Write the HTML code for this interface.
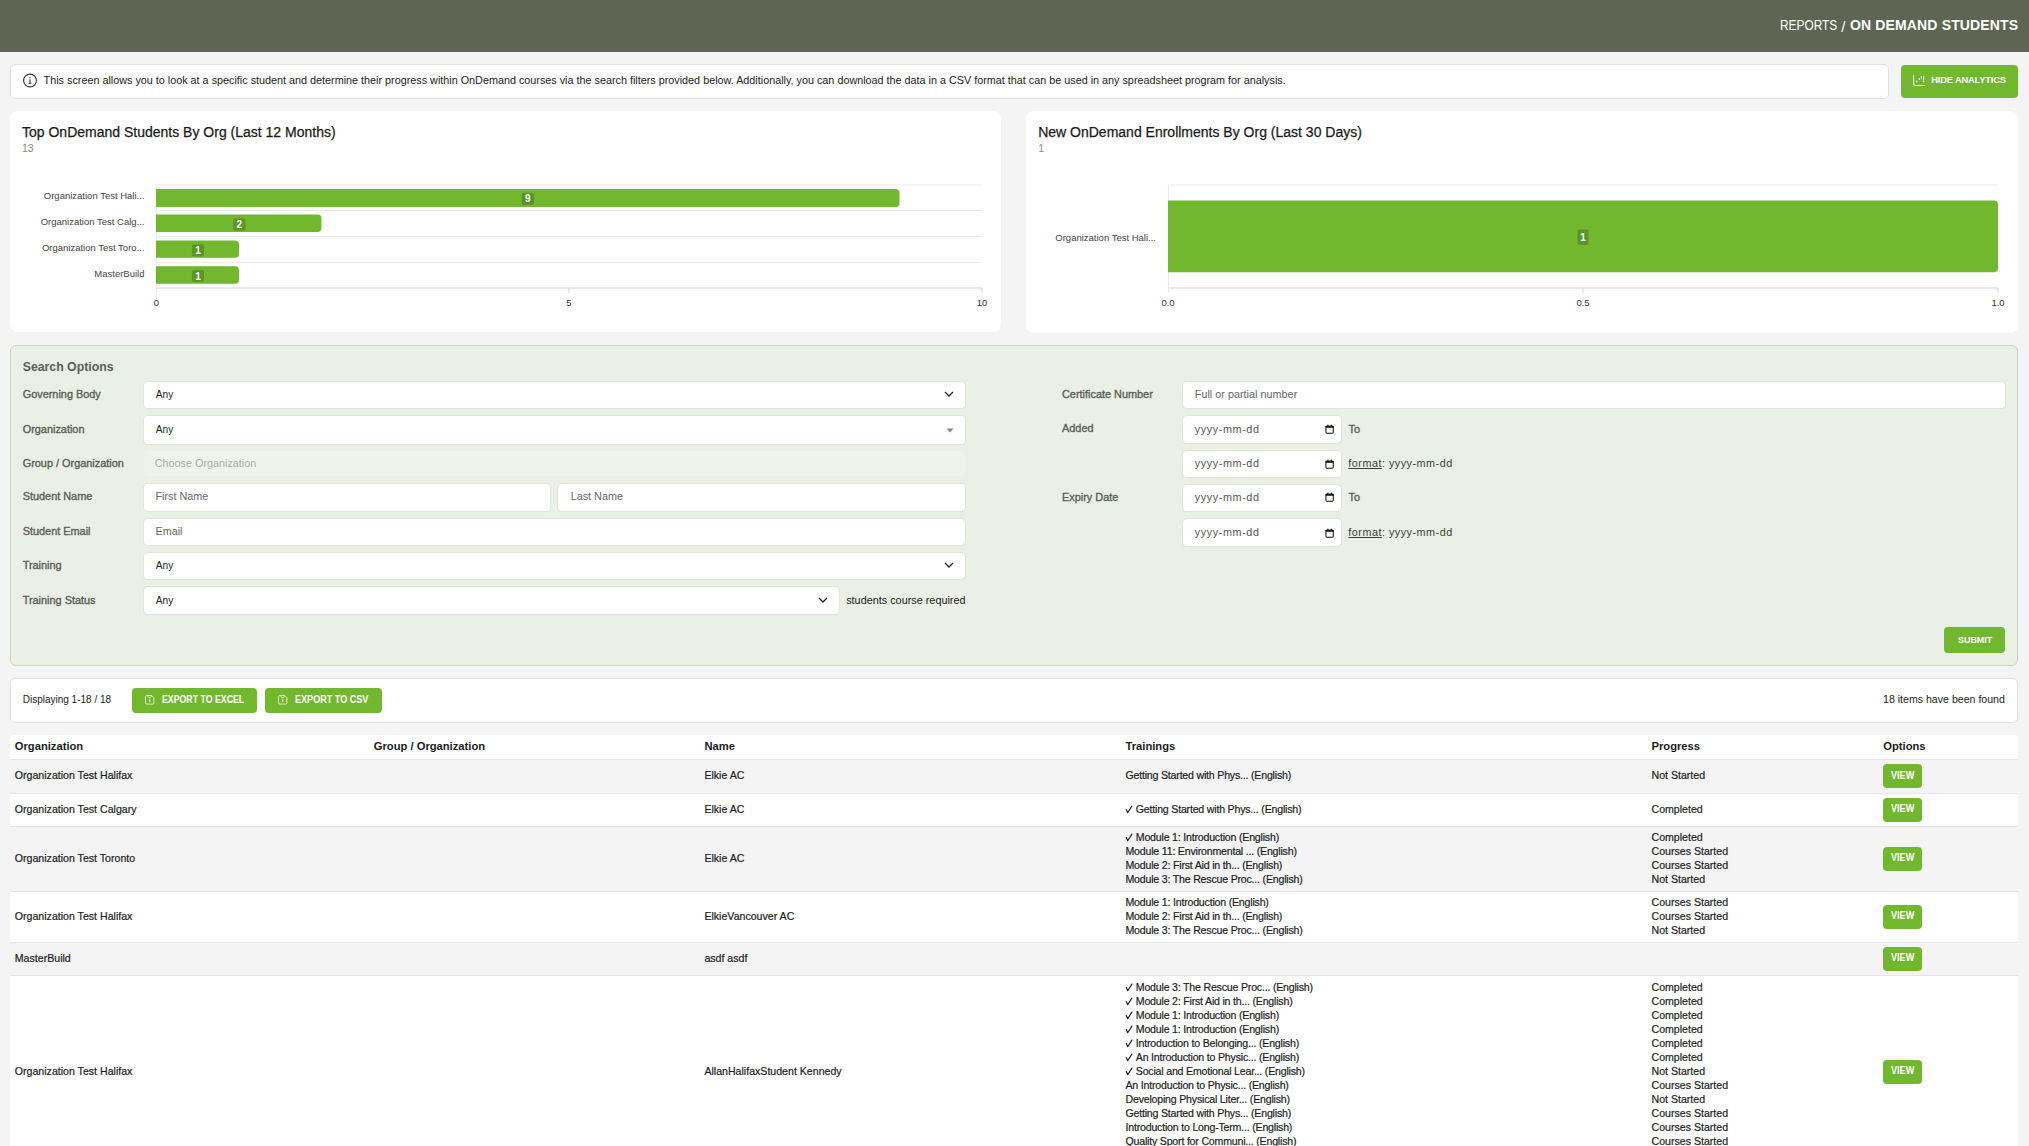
<!DOCTYPE html>
<html><head><meta charset="utf-8">
<style>
*{box-sizing:border-box;margin:0;padding:0}
html,body{width:2029px;height:1146px;overflow:hidden;background:#f4f4f4;font-family:"Liberation Sans",sans-serif;color:#222}
.abs{position:absolute}
.t{position:absolute;white-space:nowrap;line-height:1}
.inp{position:absolute;background:#fff;border-radius:4px;box-shadow:0 0 0 1px #e1e5dc, 0 1px 1.5px rgba(0,0,0,.06)}
</style></head><body>
<div class="abs" style="left:0px;top:0px;width:2029.00px;height:52.00px;background:#5e6553"></div>
<div class="t" style="left:1779.60px;top:18.34px;font-size:14px;font-weight:400;color:#fff;;transform:scaleX(0.85);transform-origin:0 0">REPORTS</div>
<div class="t" style="left:1841.20px;top:18.65px;font-size:15px;font-weight:400;color:#fff;">/</div>
<div class="t" style="right:10.70px;top:18.34px;font-size:14px;font-weight:700;color:#fff;letter-spacing:0.15px">ON DEMAND STUDENTS</div>
<div class="abs" style="left:10px;top:64px;width:1878.50px;height:34.50px;background:#fff;border-radius:5px;border:1px solid #e2e2e2"></div>
<svg class="abs" style="left:22px;top:73px" width="16" height="16" viewBox="0 0 16 16"><circle cx="8" cy="7.5" r="6.4" fill="none" stroke="#333" stroke-width="1.1"/><rect x="7.45" y="6.4" width="1.1" height="3.8" fill="#333"/><rect x="6.6" y="9.9" width="2.8" height="0.9" fill="#333"/><circle cx="8" cy="4.7" r="0.65" fill="#333"/></svg>
<div class="t" style="left:43.60px;top:75.21px;font-size:10.8px;font-weight:400;color:#222;">This screen allows you to look at a specific student and determine their progress within OnDemand courses via the search filters provided below. Additionally, you can download the data in a CSV format that can be used in any spreadsheet program for analysis.</div>
<div class="abs" style="left:1901px;top:65px;width:117.00px;height:33.00px;background:#72b82e;border-radius:4px"></div>
<svg class="abs" style="left:1912px;top:74px" width="14" height="13" viewBox="0 0 14 13"><path d="M1.6 1.6V10Q1.6 11.4 3 11.4H12.6" fill="none" stroke="#fff" stroke-width="1.05" stroke-linecap="round"/><g stroke="#fff" stroke-width="1.05" stroke-linecap="round" fill="none"><path d="M4.8 7V8"/><path d="M7.3 4.6V5.5"/><path d="M9.4 2.5V4.3"/><path d="M11.6 2.5V8"/></g></svg>
<div class="t" style="left:1931.20px;top:76.44px;font-size:9.3px;font-weight:700;color:#fff;letter-spacing:-0.15px">HIDE ANALYTICS</div>
<div class="abs" style="left:10px;top:111px;width:991.00px;height:221.00px;background:#fff;border-radius:8px"></div>
<div class="abs" style="left:1026px;top:111px;width:991.50px;height:221.50px;background:#fff;border-radius:8px"></div>
<div class="t" style="left:22.00px;top:124.64px;font-size:14px;font-weight:400;color:#1a1a1a;-webkit-text-stroke:0.25px #1a1a1a">Top OnDemand Students By Org (Last 12 Months)</div>
<div class="t" style="left:22.00px;top:142.85px;font-size:10.5px;font-weight:400;color:#8a8a8a;">13</div>
<div class="t" style="left:1038.20px;top:124.64px;font-size:14px;font-weight:400;color:#1a1a1a;-webkit-text-stroke:0.25px #1a1a1a">New OnDemand Enrollments By Org (Last 30 Days)</div>
<div class="t" style="left:1038.20px;top:142.85px;font-size:10.5px;font-weight:400;color:#8a8a8a;">1</div>
<svg class="abs" style="left:0;top:0" width="2029" height="340" viewBox="0 0 2029 340" font-family="Liberation Sans">
 <g stroke="#ececec" stroke-width="1.2">
  <line x1="156" y1="185" x2="982" y2="185"/>
  <line x1="156" y1="210.5" x2="982" y2="210.5"/>
  <line x1="156" y1="236.5" x2="982" y2="236.5"/>
  <line x1="156" y1="262.5" x2="982" y2="262.5"/>
  <line x1="156.5" y1="184" x2="156.5" y2="293"/>
  <line x1="1168" y1="185" x2="1998" y2="185"/>
  <line x1="1168.5" y1="184" x2="1168.5" y2="293"/>
 </g>
 <g stroke="#e2e2e2" stroke-width="1.6">
  <line x1="156" y1="288" x2="982" y2="288"/>
  <line x1="569" y1="288" x2="569" y2="293"/>
  <line x1="982" y1="288" x2="982" y2="293"/>
  <line x1="1168" y1="288" x2="1998" y2="288"/>
  <line x1="1583" y1="288" x2="1583" y2="293"/>
  <line x1="1998" y1="288" x2="1998" y2="293"/>
 </g>
 <g fill="#72b82e">
  <path d="M156 189H895.5a4 4 0 0 1 4 4V203a4 4 0 0 1-4 4H156Z"/>
  <path d="M156 214.6H317.5a4 4 0 0 1 4 4V228.1a4 4 0 0 1-4 4H156Z"/>
  <path d="M156 240.5H235a4 4 0 0 1 4 4V253.7a4 4 0 0 1-4 4H156Z"/>
  <path d="M156 266.2H235a4 4 0 0 1 4 4V279.7a4 4 0 0 1-4 4H156Z"/>
  <path d="M1168 200.5H1994a4 4 0 0 1 4 4V268.3a4 4 0 0 1-4 4H1168Z"/>
 </g>
 <g fill="#5b9527">
  <rect x="521.8" y="192.7" width="12.2" height="12.2" rx="2"/>
  <rect x="233.3" y="218.5" width="12.2" height="12.2" rx="2"/>
  <rect x="191.9" y="244.2" width="12.2" height="12.2" rx="2"/>
  <rect x="191.9" y="269.9" width="12.2" height="12.2" rx="2"/>
  <rect x="1577.5" y="229.6" width="11" height="15.3" rx="1.5"/>
 </g>
 <g fill="#fff" font-weight="700" font-size="10" text-anchor="middle">
  <text x="527.9" y="202.4">9</text>
  <text x="239.4" y="228.1">2</text>
  <text x="198" y="253.8">1</text>
  <text x="198" y="279.5">1</text>
  <text x="1583" y="241">1</text>
 </g>
 <g fill="#444" font-size="9.5" text-anchor="end">
  <text x="144.5" y="199">Organization Test Hali...</text>
  <text x="144.5" y="225">Organization Test Calg...</text>
  <text x="144.5" y="251">Organization Test Toro...</text>
  <text x="144.5" y="276.5">MasterBuild</text>
  <text x="1156" y="241">Organization Test Hali...</text>
 </g>
 <g fill="#333" font-size="9.5" text-anchor="middle">
  <text x="156.3" y="306">0</text>
  <text x="569" y="306">5</text>
  <text x="982" y="306">10</text>
  <text x="1168" y="306">0.0</text>
  <text x="1583" y="306">0.5</text>
  <text x="1998" y="306">1.0</text>
 </g>
</svg>
<div class="abs" style="left:10px;top:345px;width:2008.00px;height:320.50px;background:#ebf0e6;border:1px solid #c9d8bc;border-radius:6px"></div>
<div class="t" style="left:22.70px;top:361.47px;font-size:12.3px;font-weight:700;color:#586150;">Search Options</div>
<div class="t" style="left:22.70px;top:389.36px;font-size:10.9px;font-weight:400;color:#5a6152;-webkit-text-stroke:0.35px #5a6152">Governing Body</div>
<div class="t" style="left:22.70px;top:424.36px;font-size:10.9px;font-weight:400;color:#5a6152;-webkit-text-stroke:0.35px #5a6152">Organization</div>
<div class="t" style="left:22.70px;top:457.86px;font-size:10.9px;font-weight:400;color:#5a6152;-webkit-text-stroke:0.35px #5a6152">Group / Organization</div>
<div class="t" style="left:22.70px;top:491.16px;font-size:10.9px;font-weight:400;color:#5a6152;-webkit-text-stroke:0.35px #5a6152">Student Name</div>
<div class="t" style="left:22.70px;top:526.16px;font-size:10.9px;font-weight:400;color:#5a6152;-webkit-text-stroke:0.35px #5a6152">Student Email</div>
<div class="t" style="left:22.70px;top:560.16px;font-size:10.9px;font-weight:400;color:#5a6152;-webkit-text-stroke:0.35px #5a6152">Training</div>
<div class="t" style="left:22.70px;top:595.16px;font-size:10.9px;font-weight:400;color:#5a6152;-webkit-text-stroke:0.35px #5a6152">Training Status</div>
<div class="inp" style="left:143.5px;top:381.5px;width:821.50px;height:26.50px"></div>
<div class="t" style="left:155.70px;top:389.70px;font-size:10.2px;font-weight:400;color:#222;">Any</div>
<svg class="abs" style="left:944.1px;top:391.3px" width="10" height="6" viewBox="0 0 10 6"><path d="M1 1L5 5L9 1" fill="none" stroke="#222" stroke-width="1.25"/></svg>
<div class="inp" style="left:143.5px;top:416px;width:821.50px;height:28.00px"></div>
<div class="t" style="left:155.70px;top:424.70px;font-size:10.2px;font-weight:400;color:#222;">Any</div>
<svg class="abs" style="left:945.5px;top:427.5px" width="8" height="5" viewBox="0 0 8 5"><path d="M0.5 0.5H7.5L4 4.5Z" fill="#888"/></svg>
<div class="abs" style="left:143.5px;top:451px;width:821.50px;height:25.00px;background:#eff3ea;border-radius:4px"></div>
<div class="t" style="left:154.80px;top:457.91px;font-size:10.8px;font-weight:400;color:#aab0a5;">Choose Organization</div>
<div class="inp" style="left:143.5px;top:484px;width:406.50px;height:27.00px"></div>
<div class="t" style="left:155.50px;top:491.21px;font-size:10.8px;font-weight:400;color:#666;">First Name</div>
<div class="inp" style="left:558px;top:484px;width:407.00px;height:27.00px"></div>
<div class="t" style="left:570.70px;top:491.21px;font-size:10.8px;font-weight:400;color:#666;">Last Name</div>
<div class="inp" style="left:143.5px;top:518.5px;width:821.50px;height:26.50px"></div>
<div class="t" style="left:155.50px;top:526.21px;font-size:10.8px;font-weight:400;color:#666;">Email</div>
<div class="inp" style="left:143.5px;top:553px;width:821.50px;height:26.00px"></div>
<div class="t" style="left:155.70px;top:560.50px;font-size:10.2px;font-weight:400;color:#222;">Any</div>
<svg class="abs" style="left:944.1px;top:562.2px" width="10" height="6" viewBox="0 0 10 6"><path d="M1 1L5 5L9 1" fill="none" stroke="#222" stroke-width="1.25"/></svg>
<div class="inp" style="left:143.5px;top:587px;width:695.50px;height:27.00px"></div>
<div class="t" style="left:155.70px;top:595.50px;font-size:10.2px;font-weight:400;color:#222;">Any</div>
<svg class="abs" style="left:818.2px;top:597.2px" width="10" height="6" viewBox="0 0 10 6"><path d="M1 1L5 5L9 1" fill="none" stroke="#222" stroke-width="1.25"/></svg>
<div class="t" style="left:846.20px;top:595.18px;font-size:10.85px;font-weight:400;color:#222;">students course required</div>
<div class="t" style="left:1062.00px;top:389.16px;font-size:10.9px;font-weight:400;color:#5a6152;-webkit-text-stroke:0.35px #5a6152">Certificate Number</div>
<div class="t" style="left:1062.00px;top:423.16px;font-size:10.9px;font-weight:400;color:#5a6152;-webkit-text-stroke:0.35px #5a6152">Added</div>
<div class="t" style="left:1062.00px;top:492.06px;font-size:10.9px;font-weight:400;color:#5a6152;-webkit-text-stroke:0.35px #5a6152">Expiry Date</div>
<div class="inp" style="left:1183px;top:381.5px;width:821.50px;height:26.50px"></div>
<div class="t" style="left:1194.80px;top:389.18px;font-size:10.85px;font-weight:400;color:#666;">Full or partial number</div>
<div class="inp" style="left:1183px;top:416px;width:158.00px;height:27.00px"></div>
<div class="t" style="left:1194.80px;top:423.91px;font-size:10.8px;font-weight:400;color:#555;letter-spacing:0.6px">yyyy-mm-dd</div>
<svg class="abs" style="left:1325.0px;top:424.4px" width="9" height="10" viewBox="0 0 9 10"><rect x="0.95" y="2.2" width="7.3" height="7.0" rx="0.9" fill="none" stroke="#111" stroke-width="1.05"/><rect x="0.6" y="1.8" width="8" height="2.0" rx="0.6" fill="#111"/><rect x="2.4" y="0.6" width="1" height="1.6" fill="#111"/><rect x="5.9" y="0.6" width="1" height="1.6" fill="#111"/></svg>
<div class="t" style="left:1348.50px;top:424.06px;font-size:10.9px;font-weight:400;color:#5a6152;-webkit-text-stroke:0.35px #5a6152">To</div>
<div class="inp" style="left:1183px;top:450.5px;width:158.00px;height:26.50px"></div>
<div class="t" style="left:1194.80px;top:458.11px;font-size:10.8px;font-weight:400;color:#555;letter-spacing:0.6px">yyyy-mm-dd</div>
<svg class="abs" style="left:1325.0px;top:458.6px" width="9" height="10" viewBox="0 0 9 10"><rect x="0.95" y="2.2" width="7.3" height="7.0" rx="0.9" fill="none" stroke="#111" stroke-width="1.05"/><rect x="0.6" y="1.8" width="8" height="2.0" rx="0.6" fill="#111"/><rect x="2.4" y="0.6" width="1" height="1.6" fill="#111"/><rect x="5.9" y="0.6" width="1" height="1.6" fill="#111"/></svg>
<div class="t" style="left:1348.30px;top:458.11px;font-size:10.8px;font-weight:400;color:#3a4234;letter-spacing:0.5px"><u>format</u>: yyyy-mm-dd</div>
<div class="inp" style="left:1183px;top:485px;width:158.00px;height:26.00px"></div>
<div class="t" style="left:1194.80px;top:491.91px;font-size:10.8px;font-weight:400;color:#555;letter-spacing:0.6px">yyyy-mm-dd</div>
<svg class="abs" style="left:1325.0px;top:492.4px" width="9" height="10" viewBox="0 0 9 10"><rect x="0.95" y="2.2" width="7.3" height="7.0" rx="0.9" fill="none" stroke="#111" stroke-width="1.05"/><rect x="0.6" y="1.8" width="8" height="2.0" rx="0.6" fill="#111"/><rect x="2.4" y="0.6" width="1" height="1.6" fill="#111"/><rect x="5.9" y="0.6" width="1" height="1.6" fill="#111"/></svg>
<div class="t" style="left:1348.50px;top:492.06px;font-size:10.9px;font-weight:400;color:#5a6152;-webkit-text-stroke:0.35px #5a6152">To</div>
<div class="inp" style="left:1183px;top:519px;width:158.00px;height:27.00px"></div>
<div class="t" style="left:1194.80px;top:527.01px;font-size:10.8px;font-weight:400;color:#555;letter-spacing:0.6px">yyyy-mm-dd</div>
<svg class="abs" style="left:1325.0px;top:527.5px" width="9" height="10" viewBox="0 0 9 10"><rect x="0.95" y="2.2" width="7.3" height="7.0" rx="0.9" fill="none" stroke="#111" stroke-width="1.05"/><rect x="0.6" y="1.8" width="8" height="2.0" rx="0.6" fill="#111"/><rect x="2.4" y="0.6" width="1" height="1.6" fill="#111"/><rect x="5.9" y="0.6" width="1" height="1.6" fill="#111"/></svg>
<div class="t" style="left:1348.30px;top:527.01px;font-size:10.8px;font-weight:400;color:#3a4234;letter-spacing:0.5px"><u>format</u>: yyyy-mm-dd</div>
<div class="abs" style="left:1944px;top:627px;width:61.00px;height:26.00px;background:#72b82e;border-radius:4px"></div>
<div class="t" style="left:1957.60px;top:634.80px;font-size:9.6px;font-weight:700;color:#fff;;transform:scaleX(0.93);transform-origin:0 0">SUBMIT</div>
<div class="abs" style="left:10px;top:678px;width:2007.50px;height:44.50px;background:#fff;border-radius:5px;border:1px solid #e2e2e2"></div>
<div class="t" style="left:22.70px;top:694.70px;font-size:10px;font-weight:400;color:#222;">Displaying 1-18 / 18</div>
<div class="abs" style="left:132.1px;top:688.1px;width:124.60px;height:24.70px;background:#72b82e;border-radius:4px"></div>
<svg class="abs" style="left:144.8px;top:694.7px" width="10" height="10" viewBox="0 0 10 10"><path d="M1.8 0.5H6.6L8.9 2.8V7.8Q8.9 9.1 7.6 9.1H1.8Q0.5 9.1 0.5 7.8V1.8Q0.5 0.5 1.8 0.5Z" fill="none" stroke="#fff" stroke-opacity="0.85" stroke-width="0.9"/><path d="M2.6 0.6Q2.6 2.6 4.6 2.6Q6.6 2.6 6.6 0.6" fill="none" stroke="#fff" stroke-opacity="0.8" stroke-width="0.8"/><path d="M3.5 5.5H5.9L4.7 6.9Z" fill="#fff"/><path d="M4.7 3.6V5.6" stroke="#fff" stroke-width="0.7"/></svg>
<div class="t" style="left:161.70px;top:694.70px;font-size:10px;font-weight:700;color:#fff;;transform:scaleX(0.877);transform-origin:0 0">EXPORT TO EXCEL</div>
<div class="abs" style="left:265.2px;top:688.1px;width:116.70px;height:24.70px;background:#72b82e;border-radius:4px"></div>
<svg class="abs" style="left:277.9px;top:694.7px" width="10" height="10" viewBox="0 0 10 10"><path d="M1.8 0.5H6.6L8.9 2.8V7.8Q8.9 9.1 7.6 9.1H1.8Q0.5 9.1 0.5 7.8V1.8Q0.5 0.5 1.8 0.5Z" fill="none" stroke="#fff" stroke-opacity="0.85" stroke-width="0.9"/><path d="M2.6 0.6Q2.6 2.6 4.6 2.6Q6.6 2.6 6.6 0.6" fill="none" stroke="#fff" stroke-opacity="0.8" stroke-width="0.8"/><path d="M3.5 5.5H5.9L4.7 6.9Z" fill="#fff"/><path d="M4.7 3.6V5.6" stroke="#fff" stroke-width="0.7"/></svg>
<div class="t" style="left:294.80px;top:694.70px;font-size:10px;font-weight:700;color:#fff;;transform:scaleX(0.907);transform-origin:0 0">EXPORT TO CSV</div>
<div class="t" style="right:24.10px;top:694.41px;font-size:10.6px;font-weight:400;color:#222;">18 items have been found</div>
<div class="abs" style="left:10px;top:735px;width:2007.50px;height:411.00px;background:#fff;border-radius:4px 4px 0 0"></div>
<div class="t" style="left:14.80px;top:740.81px;font-size:11.2px;font-weight:700;color:#1a1a1a;">Organization</div>
<div class="t" style="left:373.80px;top:740.81px;font-size:11.2px;font-weight:700;color:#1a1a1a;">Group / Organization</div>
<div class="t" style="left:704.40px;top:740.81px;font-size:11.2px;font-weight:700;color:#1a1a1a;">Name</div>
<div class="t" style="left:1125.50px;top:740.81px;font-size:11.2px;font-weight:700;color:#1a1a1a;">Trainings</div>
<div class="t" style="left:1651.50px;top:740.81px;font-size:11.2px;font-weight:700;color:#1a1a1a;">Progress</div>
<div class="t" style="left:1883.30px;top:740.81px;font-size:11.2px;font-weight:700;color:#1a1a1a;">Options</div>
<div class="abs" style="left:10px;top:759px;width:2007.50px;height:34.00px;background:#f4f4f4;border-top:1px solid #e6e6e6"></div>
<div class="t" style="left:14.80px;top:770.41px;font-size:10.6px;font-weight:400;color:#1c1c1c;-webkit-text-stroke:0.2px #1c1c1c">Organization Test Halifax</div>
<div class="t" style="left:704.40px;top:770.41px;font-size:10.6px;font-weight:400;color:#1c1c1c;-webkit-text-stroke:0.2px #1c1c1c">Elkie AC</div>
<div class="t" style="left:1125.50px;top:770.41px;font-size:10.6px;font-weight:400;color:#1c1c1c;-webkit-text-stroke:0.2px #1c1c1c;letter-spacing:-0.2px">Getting Started with Phys... (English)</div>
<div class="t" style="left:1651.50px;top:770.41px;font-size:10.6px;font-weight:400;color:#1c1c1c;-webkit-text-stroke:0.2px #1c1c1c">Not Started</div>
<div class="abs" style="left:1883.3px;top:764.3000000000001px;width:38.30px;height:24.00px;background:#72b82e;border-radius:4px"></div>
<div class="t" style="left:1891.10px;top:770.60px;font-size:10.2px;font-weight:700;color:#fff;;transform:scaleX(0.893);transform-origin:0 0">VIEW</div>
<div class="abs" style="left:10px;top:793px;width:2007.50px;height:33.00px;background:#fff;border-top:1px solid #e6e6e6"></div>
<div class="t" style="left:14.80px;top:803.91px;font-size:10.6px;font-weight:400;color:#1c1c1c;-webkit-text-stroke:0.2px #1c1c1c">Organization Test Calgary</div>
<div class="t" style="left:704.40px;top:803.91px;font-size:10.6px;font-weight:400;color:#1c1c1c;-webkit-text-stroke:0.2px #1c1c1c">Elkie AC</div>
<svg class="abs" style="left:1125px;top:804.80px" width="8" height="9" viewBox="0 0 8 9"><path d="M1.3 4.6L2.7 7.7L6.9 1.1" fill="none" stroke="#1c1c1c" stroke-width="1.15" stroke-linecap="round" stroke-linejoin="round"/></svg>
<div class="t" style="left:1135.80px;top:803.91px;font-size:10.6px;font-weight:400;color:#1c1c1c;-webkit-text-stroke:0.2px #1c1c1c;letter-spacing:-0.2px">Getting Started with Phys... (English)</div>
<div class="t" style="left:1651.50px;top:803.91px;font-size:10.6px;font-weight:400;color:#1c1c1c;-webkit-text-stroke:0.2px #1c1c1c">Completed</div>
<div class="abs" style="left:1883.3px;top:797.8000000000001px;width:38.30px;height:24.00px;background:#72b82e;border-radius:4px"></div>
<div class="t" style="left:1891.10px;top:804.10px;font-size:10.2px;font-weight:700;color:#fff;;transform:scaleX(0.893);transform-origin:0 0">VIEW</div>
<div class="abs" style="left:10px;top:826px;width:2007.50px;height:65.00px;background:#f4f4f4;border-top:1px solid #e6e6e6"></div>
<div class="t" style="left:14.80px;top:852.91px;font-size:10.6px;font-weight:400;color:#1c1c1c;-webkit-text-stroke:0.2px #1c1c1c">Organization Test Toronto</div>
<div class="t" style="left:704.40px;top:852.91px;font-size:10.6px;font-weight:400;color:#1c1c1c;-webkit-text-stroke:0.2px #1c1c1c">Elkie AC</div>
<svg class="abs" style="left:1125px;top:832.80px" width="8" height="9" viewBox="0 0 8 9"><path d="M1.3 4.6L2.7 7.7L6.9 1.1" fill="none" stroke="#1c1c1c" stroke-width="1.15" stroke-linecap="round" stroke-linejoin="round"/></svg>
<div class="t" style="left:1135.80px;top:831.91px;font-size:10.6px;font-weight:400;color:#1c1c1c;-webkit-text-stroke:0.2px #1c1c1c;letter-spacing:-0.2px">Module 1: Introduction (English)</div>
<div class="t" style="left:1651.50px;top:831.91px;font-size:10.6px;font-weight:400;color:#1c1c1c;-webkit-text-stroke:0.2px #1c1c1c">Completed</div>
<div class="t" style="left:1125.50px;top:845.91px;font-size:10.6px;font-weight:400;color:#1c1c1c;-webkit-text-stroke:0.2px #1c1c1c;letter-spacing:-0.2px">Module 11: Environmental ... (English)</div>
<div class="t" style="left:1651.50px;top:845.91px;font-size:10.6px;font-weight:400;color:#1c1c1c;-webkit-text-stroke:0.2px #1c1c1c">Courses Started</div>
<div class="t" style="left:1125.50px;top:859.91px;font-size:10.6px;font-weight:400;color:#1c1c1c;-webkit-text-stroke:0.2px #1c1c1c;letter-spacing:-0.2px">Module 2: First Aid in th... (English)</div>
<div class="t" style="left:1651.50px;top:859.91px;font-size:10.6px;font-weight:400;color:#1c1c1c;-webkit-text-stroke:0.2px #1c1c1c">Courses Started</div>
<div class="t" style="left:1125.50px;top:873.91px;font-size:10.6px;font-weight:400;color:#1c1c1c;-webkit-text-stroke:0.2px #1c1c1c;letter-spacing:-0.2px">Module 3: The Rescue Proc... (English)</div>
<div class="t" style="left:1651.50px;top:873.91px;font-size:10.6px;font-weight:400;color:#1c1c1c;-webkit-text-stroke:0.2px #1c1c1c">Not Started</div>
<div class="abs" style="left:1883.3px;top:846.8000000000001px;width:38.30px;height:24.00px;background:#72b82e;border-radius:4px"></div>
<div class="t" style="left:1891.10px;top:853.10px;font-size:10.2px;font-weight:700;color:#fff;;transform:scaleX(0.893);transform-origin:0 0">VIEW</div>
<div class="abs" style="left:10px;top:891px;width:2007.50px;height:51.00px;background:#fff;border-top:1px solid #e6e6e6"></div>
<div class="t" style="left:14.80px;top:910.91px;font-size:10.6px;font-weight:400;color:#1c1c1c;-webkit-text-stroke:0.2px #1c1c1c">Organization Test Halifax</div>
<div class="t" style="left:704.40px;top:910.91px;font-size:10.6px;font-weight:400;color:#1c1c1c;-webkit-text-stroke:0.2px #1c1c1c">ElkieVancouver AC</div>
<div class="t" style="left:1125.50px;top:896.91px;font-size:10.6px;font-weight:400;color:#1c1c1c;-webkit-text-stroke:0.2px #1c1c1c;letter-spacing:-0.2px">Module 1: Introduction (English)</div>
<div class="t" style="left:1651.50px;top:896.91px;font-size:10.6px;font-weight:400;color:#1c1c1c;-webkit-text-stroke:0.2px #1c1c1c">Courses Started</div>
<div class="t" style="left:1125.50px;top:910.91px;font-size:10.6px;font-weight:400;color:#1c1c1c;-webkit-text-stroke:0.2px #1c1c1c;letter-spacing:-0.2px">Module 2: First Aid in th... (English)</div>
<div class="t" style="left:1651.50px;top:910.91px;font-size:10.6px;font-weight:400;color:#1c1c1c;-webkit-text-stroke:0.2px #1c1c1c">Courses Started</div>
<div class="t" style="left:1125.50px;top:924.91px;font-size:10.6px;font-weight:400;color:#1c1c1c;-webkit-text-stroke:0.2px #1c1c1c;letter-spacing:-0.2px">Module 3: The Rescue Proc... (English)</div>
<div class="t" style="left:1651.50px;top:924.91px;font-size:10.6px;font-weight:400;color:#1c1c1c;-webkit-text-stroke:0.2px #1c1c1c">Not Started</div>
<div class="abs" style="left:1883.3px;top:904.8000000000001px;width:38.30px;height:24.00px;background:#72b82e;border-radius:4px"></div>
<div class="t" style="left:1891.10px;top:911.10px;font-size:10.2px;font-weight:700;color:#fff;;transform:scaleX(0.893);transform-origin:0 0">VIEW</div>
<div class="abs" style="left:10px;top:942px;width:2007.50px;height:33.00px;background:#f4f4f4;border-top:1px solid #e6e6e6"></div>
<div class="t" style="left:14.80px;top:952.91px;font-size:10.6px;font-weight:400;color:#1c1c1c;-webkit-text-stroke:0.2px #1c1c1c">MasterBuild</div>
<div class="t" style="left:704.40px;top:952.91px;font-size:10.6px;font-weight:400;color:#1c1c1c;-webkit-text-stroke:0.2px #1c1c1c">asdf asdf</div>
<div class="abs" style="left:1883.3px;top:946.8000000000001px;width:38.30px;height:24.00px;background:#72b82e;border-radius:4px"></div>
<div class="t" style="left:1891.10px;top:953.10px;font-size:10.2px;font-weight:700;color:#fff;;transform:scaleX(0.893);transform-origin:0 0">VIEW</div>
<div class="abs" style="left:10px;top:975px;width:2007.50px;height:192.00px;background:#fff;border-top:1px solid #e6e6e6"></div>
<div class="t" style="left:14.80px;top:1066.11px;font-size:10.6px;font-weight:400;color:#1c1c1c;-webkit-text-stroke:0.2px #1c1c1c">Organization Test Halifax</div>
<div class="t" style="left:704.40px;top:1066.11px;font-size:10.6px;font-weight:400;color:#1c1c1c;-webkit-text-stroke:0.2px #1c1c1c">AllanHalifaxStudent Kennedy</div>
<svg class="abs" style="left:1125px;top:982.50px" width="8" height="9" viewBox="0 0 8 9"><path d="M1.3 4.6L2.7 7.7L6.9 1.1" fill="none" stroke="#1c1c1c" stroke-width="1.15" stroke-linecap="round" stroke-linejoin="round"/></svg>
<div class="t" style="left:1135.80px;top:981.61px;font-size:10.6px;font-weight:400;color:#1c1c1c;-webkit-text-stroke:0.2px #1c1c1c;letter-spacing:-0.2px">Module 3: The Rescue Proc... (English)</div>
<div class="t" style="left:1651.50px;top:981.61px;font-size:10.6px;font-weight:400;color:#1c1c1c;-webkit-text-stroke:0.2px #1c1c1c">Completed</div>
<svg class="abs" style="left:1125px;top:996.50px" width="8" height="9" viewBox="0 0 8 9"><path d="M1.3 4.6L2.7 7.7L6.9 1.1" fill="none" stroke="#1c1c1c" stroke-width="1.15" stroke-linecap="round" stroke-linejoin="round"/></svg>
<div class="t" style="left:1135.80px;top:995.61px;font-size:10.6px;font-weight:400;color:#1c1c1c;-webkit-text-stroke:0.2px #1c1c1c;letter-spacing:-0.2px">Module 2: First Aid in th... (English)</div>
<div class="t" style="left:1651.50px;top:995.61px;font-size:10.6px;font-weight:400;color:#1c1c1c;-webkit-text-stroke:0.2px #1c1c1c">Completed</div>
<svg class="abs" style="left:1125px;top:1010.50px" width="8" height="9" viewBox="0 0 8 9"><path d="M1.3 4.6L2.7 7.7L6.9 1.1" fill="none" stroke="#1c1c1c" stroke-width="1.15" stroke-linecap="round" stroke-linejoin="round"/></svg>
<div class="t" style="left:1135.80px;top:1009.61px;font-size:10.6px;font-weight:400;color:#1c1c1c;-webkit-text-stroke:0.2px #1c1c1c;letter-spacing:-0.2px">Module 1: Introduction (English)</div>
<div class="t" style="left:1651.50px;top:1009.61px;font-size:10.6px;font-weight:400;color:#1c1c1c;-webkit-text-stroke:0.2px #1c1c1c">Completed</div>
<svg class="abs" style="left:1125px;top:1024.50px" width="8" height="9" viewBox="0 0 8 9"><path d="M1.3 4.6L2.7 7.7L6.9 1.1" fill="none" stroke="#1c1c1c" stroke-width="1.15" stroke-linecap="round" stroke-linejoin="round"/></svg>
<div class="t" style="left:1135.80px;top:1023.61px;font-size:10.6px;font-weight:400;color:#1c1c1c;-webkit-text-stroke:0.2px #1c1c1c;letter-spacing:-0.2px">Module 1: Introduction (English)</div>
<div class="t" style="left:1651.50px;top:1023.61px;font-size:10.6px;font-weight:400;color:#1c1c1c;-webkit-text-stroke:0.2px #1c1c1c">Completed</div>
<svg class="abs" style="left:1125px;top:1038.50px" width="8" height="9" viewBox="0 0 8 9"><path d="M1.3 4.6L2.7 7.7L6.9 1.1" fill="none" stroke="#1c1c1c" stroke-width="1.15" stroke-linecap="round" stroke-linejoin="round"/></svg>
<div class="t" style="left:1135.80px;top:1037.61px;font-size:10.6px;font-weight:400;color:#1c1c1c;-webkit-text-stroke:0.2px #1c1c1c;letter-spacing:-0.2px">Introduction to Belonging... (English)</div>
<div class="t" style="left:1651.50px;top:1037.61px;font-size:10.6px;font-weight:400;color:#1c1c1c;-webkit-text-stroke:0.2px #1c1c1c">Completed</div>
<svg class="abs" style="left:1125px;top:1052.50px" width="8" height="9" viewBox="0 0 8 9"><path d="M1.3 4.6L2.7 7.7L6.9 1.1" fill="none" stroke="#1c1c1c" stroke-width="1.15" stroke-linecap="round" stroke-linejoin="round"/></svg>
<div class="t" style="left:1135.80px;top:1051.61px;font-size:10.6px;font-weight:400;color:#1c1c1c;-webkit-text-stroke:0.2px #1c1c1c;letter-spacing:-0.2px">An Introduction to Physic... (English)</div>
<div class="t" style="left:1651.50px;top:1051.61px;font-size:10.6px;font-weight:400;color:#1c1c1c;-webkit-text-stroke:0.2px #1c1c1c">Completed</div>
<svg class="abs" style="left:1125px;top:1066.50px" width="8" height="9" viewBox="0 0 8 9"><path d="M1.3 4.6L2.7 7.7L6.9 1.1" fill="none" stroke="#1c1c1c" stroke-width="1.15" stroke-linecap="round" stroke-linejoin="round"/></svg>
<div class="t" style="left:1135.80px;top:1065.61px;font-size:10.6px;font-weight:400;color:#1c1c1c;-webkit-text-stroke:0.2px #1c1c1c;letter-spacing:-0.2px">Social and Emotional Lear... (English)</div>
<div class="t" style="left:1651.50px;top:1065.61px;font-size:10.6px;font-weight:400;color:#1c1c1c;-webkit-text-stroke:0.2px #1c1c1c">Not Started</div>
<div class="t" style="left:1125.50px;top:1079.61px;font-size:10.6px;font-weight:400;color:#1c1c1c;-webkit-text-stroke:0.2px #1c1c1c;letter-spacing:-0.2px">An Introduction to Physic... (English)</div>
<div class="t" style="left:1651.50px;top:1079.61px;font-size:10.6px;font-weight:400;color:#1c1c1c;-webkit-text-stroke:0.2px #1c1c1c">Courses Started</div>
<div class="t" style="left:1125.50px;top:1093.61px;font-size:10.6px;font-weight:400;color:#1c1c1c;-webkit-text-stroke:0.2px #1c1c1c;letter-spacing:-0.2px">Developing Physical Liter... (English)</div>
<div class="t" style="left:1651.50px;top:1093.61px;font-size:10.6px;font-weight:400;color:#1c1c1c;-webkit-text-stroke:0.2px #1c1c1c">Not Started</div>
<div class="t" style="left:1125.50px;top:1107.61px;font-size:10.6px;font-weight:400;color:#1c1c1c;-webkit-text-stroke:0.2px #1c1c1c;letter-spacing:-0.2px">Getting Started with Phys... (English)</div>
<div class="t" style="left:1651.50px;top:1107.61px;font-size:10.6px;font-weight:400;color:#1c1c1c;-webkit-text-stroke:0.2px #1c1c1c">Courses Started</div>
<div class="t" style="left:1125.50px;top:1121.61px;font-size:10.6px;font-weight:400;color:#1c1c1c;-webkit-text-stroke:0.2px #1c1c1c;letter-spacing:-0.2px">Introduction to Long-Term... (English)</div>
<div class="t" style="left:1651.50px;top:1121.61px;font-size:10.6px;font-weight:400;color:#1c1c1c;-webkit-text-stroke:0.2px #1c1c1c">Courses Started</div>
<div class="t" style="left:1125.50px;top:1135.61px;font-size:10.6px;font-weight:400;color:#1c1c1c;-webkit-text-stroke:0.2px #1c1c1c;letter-spacing:-0.2px">Quality Sport for Communi... (English)</div>
<div class="t" style="left:1651.50px;top:1135.61px;font-size:10.6px;font-weight:400;color:#1c1c1c;-webkit-text-stroke:0.2px #1c1c1c">Courses Started</div>
<div class="abs" style="left:1883.3px;top:1060.0px;width:38.30px;height:24.00px;background:#72b82e;border-radius:4px"></div>
<div class="t" style="left:1891.10px;top:1066.30px;font-size:10.2px;font-weight:700;color:#fff;;transform:scaleX(0.893);transform-origin:0 0">VIEW</div>
</body></html>
